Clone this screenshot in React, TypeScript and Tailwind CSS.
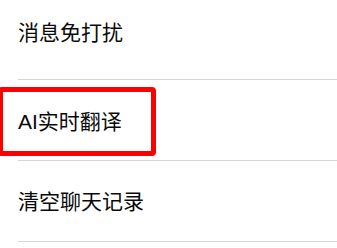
import React from "react";

const font = { fontFamily: '"Liberation Sans", "Noto Sans CJK SC", sans-serif' };

const App: React.FC = () => {
  return (
    <div className="relative h-[248px] w-[337px] overflow-hidden bg-white" style={font}>
      <div className="pl-[18px]">
        <div className="flex h-[79px] items-start pt-[17px] text-[21px] text-[#0a0a0a]">
          消息免打扰
        </div>
        <div className="h-px bg-[#d6d6d6]" />
        <div className="flex h-[80px] items-start pt-[26px] text-[21px] text-[#0a0a0a]">
          AI实时翻译
        </div>
        <div className="h-px bg-[#d6d6d6]" />
        <div className="flex h-[80px] items-start pt-[25px] text-[21px] text-[#0a0a0a]">
          清空聊天记录
        </div>
        <div className="h-px bg-[#d6d6d6]" />
      </div>

      {/* highlight box */}
      <div className="absolute left-[-2px] top-[87px] h-[69px] w-[158px] rounded-[4px] border-[5px] border-[#ff0000]" />
    </div>
  );
};

export default App;
